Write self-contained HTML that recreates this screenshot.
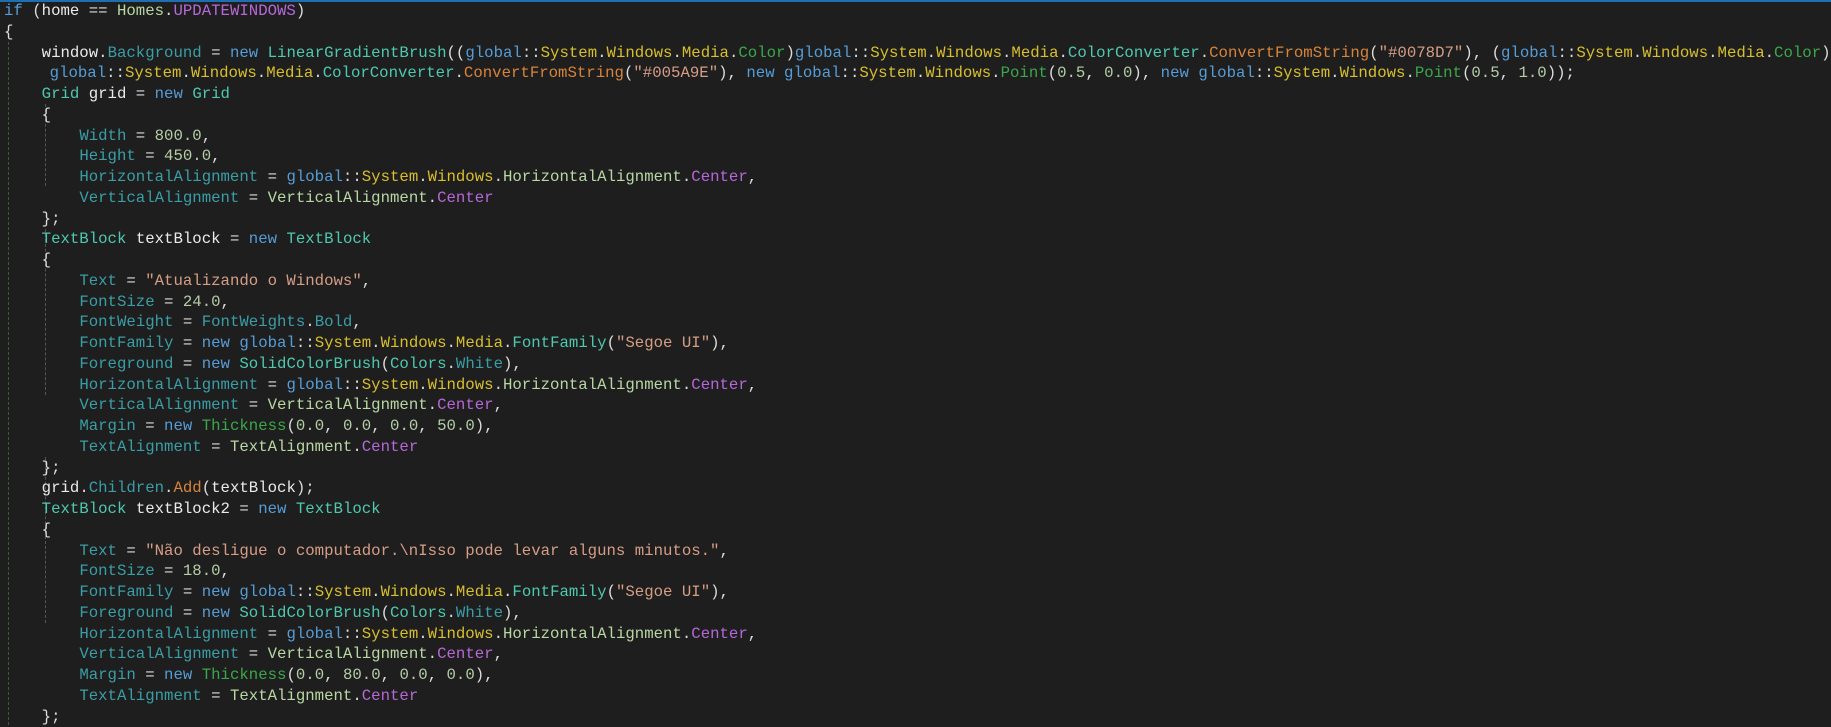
<!DOCTYPE html>
<html><head><meta charset="utf-8"><style>
html,body{margin:0;padding:0;}
body{width:1831px;height:725px;background:#1e1e1e;overflow:hidden;position:relative;
font-family:"Liberation Mono",monospace;font-size:15.7px;color:#dcdcdc;}
#top{position:absolute;left:0;top:0;width:1831px;height:2px;background:#1f6fb0;}
.code{position:absolute;left:4px;top:1px;white-space:pre;line-height:20.75px;}
.k{color:#569cd6}.t{color:#4ec9b0}.p{color:#3a9ea6}.n{color:#d8bf2e}.m{color:#d7843a}
.g{color:#3aa84a}.e{color:#b668d8}.et{color:#b8d7a3}.num{color:#b5cea8}.s{color:#d69d85}
.v{color:#eaeaea}
.guide{position:absolute;width:0;border-left:1px dashed #3d5a3a;}
</style></head><body>
<div id="top"></div>
<div class="guide" style="left:8px;top:42px;height:683px"></div>
<div class="guide" style="left:45px;top:104px;height:82px;border-color:#555"></div>
<div class="guide" style="left:45px;top:229px;height:166px;border-color:#555"></div>
<div class="guide" style="left:45px;top:457px;height:166px;border-color:#555"></div>
<div class="code"><span class="k">if</span> (<span class="v">home</span> == <span class="et">Homes</span>.<span class="e">UPDATEWINDOWS</span>)
{
    <span class="v">window</span>.<span class="p">Background</span> = <span class="k">new</span> <span class="t">LinearGradientBrush</span>((<span class="k">global</span>::<span class="n">System</span>.<span class="n">Windows</span>.<span class="n">Media</span>.<span class="g">Color</span>)<span class="k">global</span>::<span class="n">System</span>.<span class="n">Windows</span>.<span class="n">Media</span>.<span class="t">ColorConverter</span>.<span class="m">ConvertFromString</span>(<span class="s">"#0078D7"</span>), (<span class="k">global</span>::<span class="n">System</span>.<span class="n">Windows</span>.<span class="n">Media</span>.<span class="g">Color</span>)
    <span style="padding-left:8px"></span><span class="k">global</span>::<span class="n">System</span>.<span class="n">Windows</span>.<span class="n">Media</span>.<span class="t">ColorConverter</span>.<span class="m">ConvertFromString</span>(<span class="s">"#005A9E"</span>), <span class="k">new</span> <span class="k">global</span>::<span class="n">System</span>.<span class="n">Windows</span>.<span class="g">Point</span>(<span class="num">0.5</span>, <span class="num">0.0</span>), <span class="k">new</span> <span class="k">global</span>::<span class="n">System</span>.<span class="n">Windows</span>.<span class="g">Point</span>(<span class="num">0.5</span>, <span class="num">1.0</span>));
    <span class="t">Grid</span> <span class="v">grid</span> = <span class="k">new</span> <span class="t">Grid</span>
    {
        <span class="p">Width</span> = <span class="num">800.0</span>,
        <span class="p">Height</span> = <span class="num">450.0</span>,
        <span class="p">HorizontalAlignment</span> = <span class="k">global</span>::<span class="n">System</span>.<span class="n">Windows</span>.<span class="et">HorizontalAlignment</span>.<span class="e">Center</span>,
        <span class="p">VerticalAlignment</span> = <span class="et">VerticalAlignment</span>.<span class="e">Center</span>
    };
    <span class="t">TextBlock</span> <span class="v">textBlock</span> = <span class="k">new</span> <span class="t">TextBlock</span>
    {
        <span class="p">Text</span> = <span class="s">"Atualizando o Windows"</span>,
        <span class="p">FontSize</span> = <span class="num">24.0</span>,
        <span class="p">FontWeight</span> = <span class="p">FontWeights</span>.<span class="p">Bold</span>,
        <span class="p">FontFamily</span> = <span class="k">new</span> <span class="k">global</span>::<span class="n">System</span>.<span class="n">Windows</span>.<span class="n">Media</span>.<span class="t">FontFamily</span>(<span class="s">"Segoe UI"</span>),
        <span class="p">Foreground</span> = <span class="k">new</span> <span class="t">SolidColorBrush</span>(<span class="t">Colors</span>.<span class="p">White</span>),
        <span class="p">HorizontalAlignment</span> = <span class="k">global</span>::<span class="n">System</span>.<span class="n">Windows</span>.<span class="et">HorizontalAlignment</span>.<span class="e">Center</span>,
        <span class="p">VerticalAlignment</span> = <span class="et">VerticalAlignment</span>.<span class="e">Center</span>,
        <span class="p">Margin</span> = <span class="k">new</span> <span class="g">Thickness</span>(<span class="num">0.0</span>, <span class="num">0.0</span>, <span class="num">0.0</span>, <span class="num">50.0</span>),
        <span class="p">TextAlignment</span> = <span class="et">TextAlignment</span>.<span class="e">Center</span>
    };
    <span class="v">grid</span>.<span class="p">Children</span>.<span class="m">Add</span>(<span class="v">textBlock</span>);
    <span class="t">TextBlock</span> <span class="v">textBlock2</span> = <span class="k">new</span> <span class="t">TextBlock</span>
    {
        <span class="p">Text</span> = <span class="s">"Não desligue o computador.\nIsso pode levar alguns minutos."</span>,
        <span class="p">FontSize</span> = <span class="num">18.0</span>,
        <span class="p">FontFamily</span> = <span class="k">new</span> <span class="k">global</span>::<span class="n">System</span>.<span class="n">Windows</span>.<span class="n">Media</span>.<span class="t">FontFamily</span>(<span class="s">"Segoe UI"</span>),
        <span class="p">Foreground</span> = <span class="k">new</span> <span class="t">SolidColorBrush</span>(<span class="t">Colors</span>.<span class="p">White</span>),
        <span class="p">HorizontalAlignment</span> = <span class="k">global</span>::<span class="n">System</span>.<span class="n">Windows</span>.<span class="et">HorizontalAlignment</span>.<span class="e">Center</span>,
        <span class="p">VerticalAlignment</span> = <span class="et">VerticalAlignment</span>.<span class="e">Center</span>,
        <span class="p">Margin</span> = <span class="k">new</span> <span class="g">Thickness</span>(<span class="num">0.0</span>, <span class="num">80.0</span>, <span class="num">0.0</span>, <span class="num">0.0</span>),
        <span class="p">TextAlignment</span> = <span class="et">TextAlignment</span>.<span class="e">Center</span>
    };</div>
</body></html>
